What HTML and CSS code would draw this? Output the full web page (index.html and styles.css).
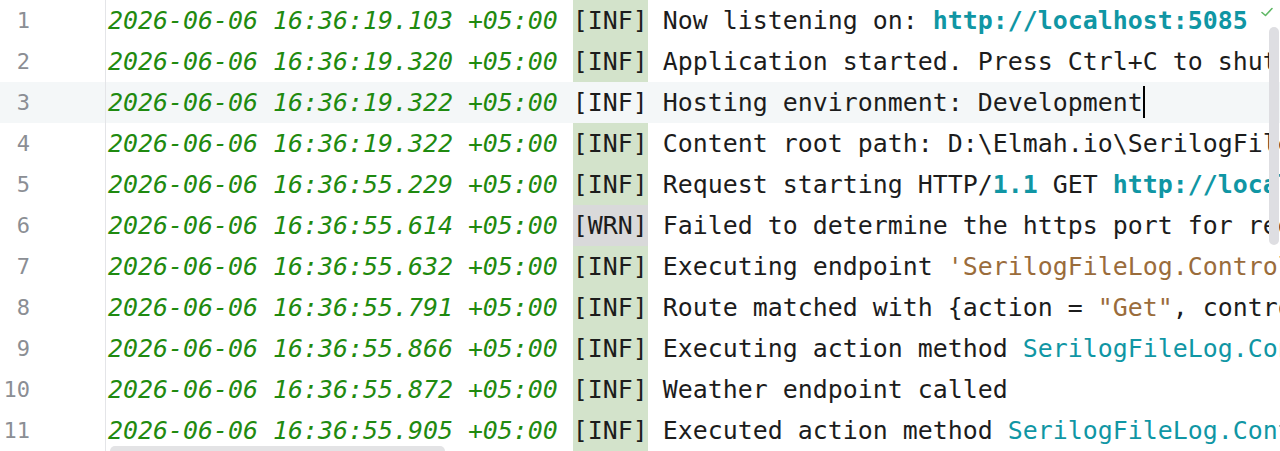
FILE: index.html
```html
<!DOCTYPE html>
<html>
<head>
<meta charset="utf-8">
<link rel="stylesheet" href="styles.css">
</head>
<body>
<div class="editor">
  <div class="row"><span class="ln">1</span><span class="code"><span class="ts">2026-06-06 16:36:19.103 +05:00</span> <span class="lvl">[INF]</span> Now listening on: <span class="url">http://localhost:5085</span></span></div>
  <div class="row"><span class="ln">2</span><span class="code"><span class="ts">2026-06-06 16:36:19.320 +05:00</span> <span class="lvl">[INF]</span> Application started. Press Ctrl+C to shut down.</span></div>
  <div class="row current"><span class="ln">3</span><span class="code"><span class="ts">2026-06-06 16:36:19.322 +05:00</span> <span class="lvl">[INF]</span> Hosting environment: Development<span class="caret"></span></span></div>
  <div class="row"><span class="ln">4</span><span class="code"><span class="ts">2026-06-06 16:36:19.322 +05:00</span> <span class="lvl">[INF]</span> Content root path: D:\Elmah.io\SerilogFileLog\SerilogFileLog</span></div>
  <div class="row"><span class="ln">5</span><span class="code"><span class="ts">2026-06-06 16:36:55.229 +05:00</span> <span class="lvl">[INF]</span> Request starting HTTP/<span class="num">1.1</span> GET <span class="url">http://localhost:5085/weatherforecast</span> - null null</span></div>
  <div class="row"><span class="ln">6</span><span class="code"><span class="ts">2026-06-06 16:36:55.614 +05:00</span> <span class="lvl wrn">[WRN]</span> Failed to determine the https port for redirect.</span></div>
  <div class="row"><span class="ln">7</span><span class="code"><span class="ts">2026-06-06 16:36:55.632 +05:00</span> <span class="lvl">[INF]</span> Executing endpoint <span class="str">'SerilogFileLog.Controllers.WeatherForecastController.Get (SerilogFileLog)'</span></span></div>
  <div class="row"><span class="ln">8</span><span class="code"><span class="ts">2026-06-06 16:36:55.791 +05:00</span> <span class="lvl">[INF]</span> Route matched with {action = <span class="str">"Get"</span>, controller = <span class="str">"WeatherForecast"</span>}.</span></div>
  <div class="row"><span class="ln">9</span><span class="code"><span class="ts">2026-06-06 16:36:55.866 +05:00</span> <span class="lvl">[INF]</span> Executing action method <span class="ref">SerilogFileLog.Controllers.WeatherForecastController.Get</span></span></div>
  <div class="row"><span class="ln">10</span><span class="code"><span class="ts">2026-06-06 16:36:55.872 +05:00</span> <span class="lvl">[INF]</span> Weather endpoint called</span></div>
  <div class="row"><span class="ln">11</span><span class="code"><span class="ts">2026-06-06 16:36:55.905 +05:00</span> <span class="lvl">[INF]</span> Executed action method <span class="ref">SerilogFileLog.Controllers.WeatherForecastController.Get</span></span></div>
  <svg class="check" width="14" height="12" viewBox="0 0 14 12"><path d="M2 6.5 L5.5 9.5 L12 2.5" fill="none" stroke="#5fb865" stroke-width="1.6" stroke-linecap="round" stroke-linejoin="round"/></svg>
  <div class="vscroll"></div>
  <div class="hscroll"></div>
</div>
</body>
</html>
```

FILE: styles.css
```css
html, body {
  margin: 0;
  padding: 0;
  background: #ffffff;
  overflow: hidden;
}
.editor {
  position: relative;
  width: 1280px;
  height: 451px;
  overflow: hidden;
  display: flex;
  flex-direction: column;
}
.row {
  display: flex;
  height: 41px;
  flex: 0 0 41px;
  white-space: pre;
}
.row.current {
  background: #f4f7f8;
}
.ln {
  box-sizing: border-box;
  flex: 0 0 106px;
  width: 106px;
  padding-top: 1px;
  padding-right: 75px;
  text-align: right;
  border-right: 1px solid #e4e5e8;
  font-family: "DejaVu Sans Mono", monospace;
  font-size: 22px;
  line-height: 40px;
  color: #8b8e94;
}
.code {
  padding-left: 2px;
  padding-top: 1px;
  font-family: "DejaVu Sans Mono", monospace;
  font-size: 24.92px;
  line-height: 40px;
  color: #1c1c1c;
}
.ts {
  font-style: italic;
  color: #1f8a10;
}
.lvl {
  display: inline-block;
  height: 41px;
  line-height: 42px;
  margin-top: -1px;
  vertical-align: top;
  background: #d3e3cb;
}
.lvl.wrn {
  background: #d9d9da;
}
.current .lvl {
  background: transparent;
}
.url {
  color: #1096a4;
  font-weight: bold;
}
.num {
  color: #1096a4;
  font-weight: bold;
}
.ref {
  color: #1096a4;
}
.str {
  color: #9a6c3b;
}
.caret {
  display: inline-block;
  width: 2px;
  height: 32px;
  vertical-align: middle;
  background: #000000;
  margin-top: -4px;
}
.check {
  position: absolute;
  left: 1260px;
  top: 6px;
}
.vscroll {
  position: absolute;
  left: 1269px;
  top: 27px;
  width: 10px;
  height: 218px;
  border-radius: 5px;
  background: #dedee2;
}
.hscroll {
  position: absolute;
  left: 110px;
  top: 446px;
  width: 335px;
  height: 10px;
  border-radius: 5px;
  background: #e3e3e5;
}
```
